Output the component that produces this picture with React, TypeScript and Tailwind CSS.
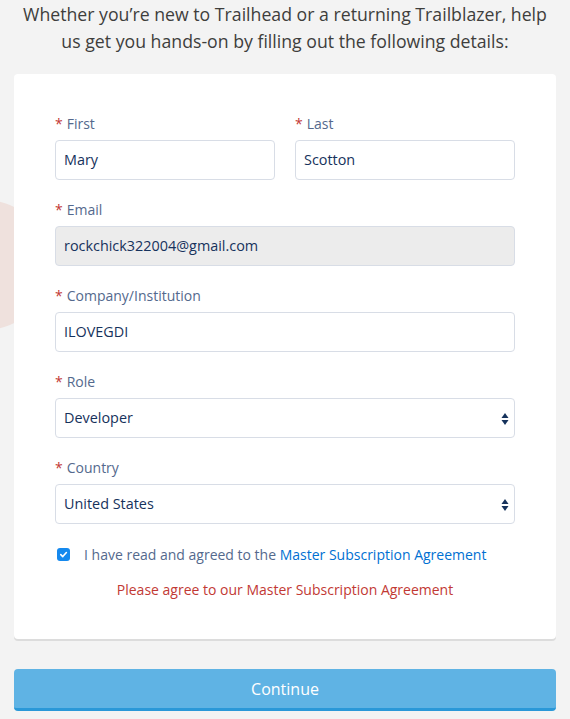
import React from "react";

const Label = ({ text }: { text: string }) => (
  <label className="block h-5 mb-[6px] text-[14px] leading-5 text-[#54698d]">
    <span className="text-[#c23934] mr-[4px]">*</span>
    {text}
  </label>
);

const SelectArrows = () => (
  <svg width="8" height="14" viewBox="0 0 8 14" className="absolute right-[5px] top-[13px]">
    <path d="M4 1 L7.5 6 L0.5 6 Z" fill="#16325c" />
    <path d="M4 13 L7.5 8 L0.5 8 Z" fill="#16325c" />
  </svg>
);

const Input = ({ value, disabled, select }: { value: string; disabled?: boolean; select?: boolean }) => (
  <div
    className={`relative h-10 rounded-[4px] border border-[#d8dde6] px-[8px] flex items-center text-[14.4px] text-[#16325c] ${
      disabled ? "bg-[#ececec]" : "bg-white"
    }`}
  >
    {value}
    {select && <SelectArrows />}
  </div>
);

export default function App() {
  return (
    <div
      className="relative min-h-[719px] w-full overflow-hidden bg-[#f3f3f3]"
      style={{ fontFamily: '"Open Sans", "Noto Sans", sans-serif' }}
    >
      {/* decorative blob behind card */}
      <div className="absolute left-[-120px] top-[200px] w-[170px] h-[130px] rounded-full bg-[#efe1dd]" />

      <div className="relative px-[14px]">
        <p className="text-center whitespace-nowrap text-[17.7px] leading-[27px] text-[#3e3e3c] mt-[1px]">
          Whether you’re new to Trailhead or a returning Trailblazer, help
          <br />
          us get you hands-on by filling out the following details:
        </p>

        <div className="mt-[19px] bg-white rounded-[4px] shadow-[0_2px_0_#dcdcdc] px-[41px] pt-[40px] pb-[39px]">
          <div className="grid grid-cols-2 gap-x-5">
            <div>
              <Label text="First" />
              <Input value="Mary" />
            </div>
            <div>
              <Label text="Last" />
              <Input value="Scotton" />
            </div>
          </div>

          <div className="mt-5">
            <Label text="Email" />
            <Input value="rockchick322004@gmail.com" disabled />
          </div>
          <div className="mt-5">
            <Label text="Company/Institution" />
            <Input value="ILOVEGDI" />
          </div>
          <div className="mt-5">
            <Label text="Role" />
            <Input value="Developer" select />
          </div>
          <div className="mt-5">
            <Label text="Country" />
            <Input value="United States" select />
          </div>

          <div className="mt-[20px] flex items-center h-5 text-[14px] text-[#54698d]">
            <span className="ml-[2px] mr-[14px] w-[13px] h-[13px] rounded-[3px] bg-[#1589ee] flex items-center justify-center">
              <svg width="9" height="9" viewBox="0 0 10 10">
                <path d="M2 5.2 L4.2 7.3 L8.2 2.8" stroke="white" strokeWidth="1.8" fill="none" strokeLinecap="round" strokeLinejoin="round" />
              </svg>
            </span>
            I have read and agreed to the&nbsp;
            <span className="text-[#0070d2]">Master Subscription Agreement</span>
          </div>

          <p className="mt-[16px] text-center text-[14px] leading-5 text-[#c23934]">
            Please agree to our Master Subscription Agreement
          </p>
        </div>

        <button className="mt-[30px] w-full h-[42px] rounded-[4px] bg-[#5fb3e4] border-b-[3px] border-[#2a98d8] text-white text-[16px]">
          Continue
        </button>
      </div>
    </div>
  );
}
